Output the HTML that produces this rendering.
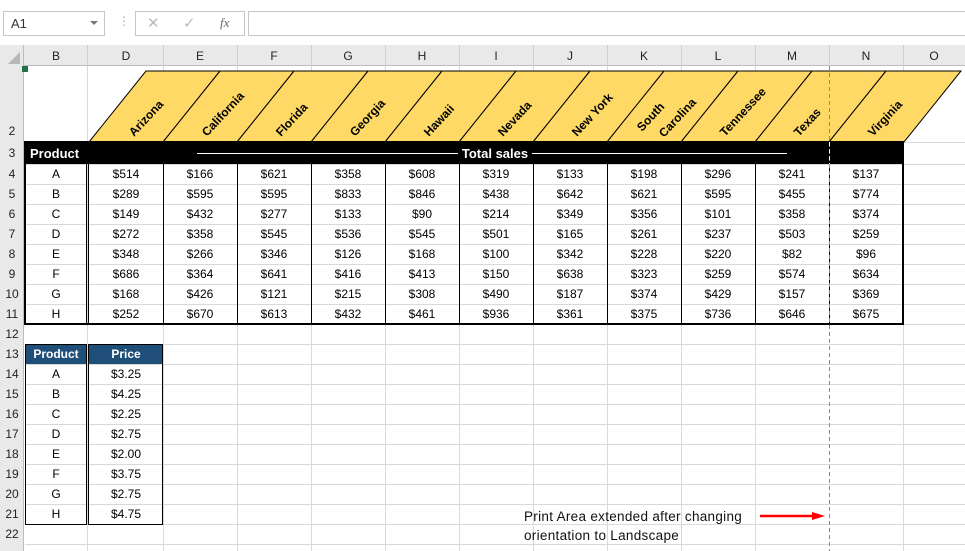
<!DOCTYPE html>
<html><head><meta charset="utf-8"><style>
*{margin:0;padding:0;box-sizing:border-box}
body{width:965px;height:551px;position:relative;overflow:hidden;background:#fff;font-family:"Liberation Sans",sans-serif;color:#000}
.a{position:absolute}
.row{position:absolute;left:25px;display:flex;height:20px;font-size:12px;line-height:20px}
.row span{display:block;text-align:center;width:74px}
.row span.b{width:62px}.row span.g{width:2px}
.rh{position:absolute;left:0;width:24px;text-align:center;font-size:12px;color:#222}
.ch{position:absolute;top:46px;height:20px;line-height:20px;text-align:center;font-size:12px;color:#222}
</style></head><body>
<div class="a" style="left:0;top:0;width:965px;height:45px;background:#fff"></div>
<div class="a" style="left:3px;top:11px;width:102px;height:25px;border:1px solid #c6c6c6;background:#fff;font-size:13px;line-height:23px;padding-left:7px;color:#333">A1</div>
<div class="a" style="left:90px;top:21px;width:0;height:0;border-left:4px solid transparent;border-right:4px solid transparent;border-top:4px solid #777"></div>
<div class="a" style="left:118px;top:14px;font-size:12px;color:#aaa">⋮</div>
<div class="a" style="left:135px;top:11px;width:110px;height:25px;border:1px solid #c6c6c6;background:#fff"></div>
<div class="a" style="left:147px;top:14px;font-size:15px;color:#bbb">✕</div>
<div class="a" style="left:183px;top:14px;font-size:15px;color:#bbb">✓</div>
<div class="a" style="left:220px;top:15px;font-size:13px;font-style:italic;font-family:'Liberation Serif',serif;color:#666">fx</div>
<div class="a" style="left:248px;top:11px;width:720px;height:25px;border:1px solid #c6c6c6;background:#fff"></div>
<div class="a" style="left:0;top:45px;width:965px;height:21px;background:#e9e9e9;border-bottom:1px solid #bdbdbd"></div>
<div class="a" style="left:0;top:45px;width:24px;height:506px;background:#e9e9e9;border-right:1px solid #bdbdbd"></div>
<div class="a" style="left:8px;top:52px;width:0;height:0;border-left:12px solid transparent;border-bottom:12px solid #b8b8b8"></div>
<div class="a" style="left:22px;top:66px;width:6px;height:6px;background:#217346"></div>
<svg class="a" style="left:0;top:45px" width="965" height="21">
<g stroke="#cfcfcf"><line x1="87.5" y1="0" x2="87.5" y2="21"/><line x1="163.5" y1="0" x2="163.5" y2="21"/><line x1="237.5" y1="0" x2="237.5" y2="21"/><line x1="311.5" y1="0" x2="311.5" y2="21"/><line x1="385.5" y1="0" x2="385.5" y2="21"/><line x1="459.5" y1="0" x2="459.5" y2="21"/><line x1="533.5" y1="0" x2="533.5" y2="21"/><line x1="607.5" y1="0" x2="607.5" y2="21"/><line x1="681.5" y1="0" x2="681.5" y2="21"/><line x1="755.5" y1="0" x2="755.5" y2="21"/><line x1="829.5" y1="0" x2="829.5" y2="21"/><line x1="903.5" y1="0" x2="903.5" y2="21"/></g></svg>
<div class="ch" style="left:25px;width:62px">B</div>
<div class="ch" style="left:89px;width:74px">D</div><div class="ch" style="left:163px;width:74px">E</div><div class="ch" style="left:237px;width:74px">F</div><div class="ch" style="left:311px;width:74px">G</div><div class="ch" style="left:385px;width:74px">H</div><div class="ch" style="left:459px;width:74px">I</div><div class="ch" style="left:533px;width:74px">J</div><div class="ch" style="left:607px;width:74px">K</div><div class="ch" style="left:681px;width:74px">L</div><div class="ch" style="left:755px;width:74px">M</div><div class="ch" style="left:829px;width:74px">N</div><div class="ch" style="left:903px;width:62px">O</div>
<svg class="a" style="left:25px;top:66px" width="940" height="485">
<g stroke="#d9d9d9">
<line x1="62.5" y1="0" x2="62.5" y2="485"/><line x1="138.5" y1="0" x2="138.5" y2="485"/><line x1="212.5" y1="0" x2="212.5" y2="485"/><line x1="286.5" y1="0" x2="286.5" y2="485"/><line x1="360.5" y1="0" x2="360.5" y2="485"/><line x1="434.5" y1="0" x2="434.5" y2="485"/><line x1="508.5" y1="0" x2="508.5" y2="485"/><line x1="582.5" y1="0" x2="582.5" y2="485"/><line x1="656.5" y1="0" x2="656.5" y2="485"/><line x1="730.5" y1="0" x2="730.5" y2="485"/><line x1="878.5" y1="0" x2="878.5" y2="485"/>
<line x1="0" y1="76.5" x2="940" y2="76.5"/><line x1="0" y1="98.5" x2="940" y2="98.5"/><line x1="0" y1="118.5" x2="940" y2="118.5"/><line x1="0" y1="138.5" x2="940" y2="138.5"/><line x1="0" y1="158.5" x2="940" y2="158.5"/><line x1="0" y1="178.5" x2="940" y2="178.5"/><line x1="0" y1="198.5" x2="940" y2="198.5"/><line x1="0" y1="218.5" x2="940" y2="218.5"/><line x1="0" y1="238.5" x2="940" y2="238.5"/><line x1="0" y1="258.5" x2="940" y2="258.5"/><line x1="0" y1="278.5" x2="940" y2="278.5"/><line x1="0" y1="298.5" x2="940" y2="298.5"/><line x1="0" y1="318.5" x2="940" y2="318.5"/><line x1="0" y1="338.5" x2="940" y2="338.5"/><line x1="0" y1="358.5" x2="940" y2="358.5"/><line x1="0" y1="378.5" x2="940" y2="378.5"/><line x1="0" y1="398.5" x2="940" y2="398.5"/><line x1="0" y1="418.5" x2="940" y2="418.5"/><line x1="0" y1="438.5" x2="940" y2="438.5"/><line x1="0" y1="458.5" x2="940" y2="458.5"/><line x1="0" y1="478.5" x2="940" y2="478.5"/>
</g></svg>
<div class="rh" style="top:124px">2</div><div class="rh" style="top:146px">3</div><div class="rh" style="top:167px">4</div><div class="rh" style="top:187px">5</div><div class="rh" style="top:207px">6</div><div class="rh" style="top:227px">7</div><div class="rh" style="top:247px">8</div><div class="rh" style="top:267px">9</div><div class="rh" style="top:287px">10</div><div class="rh" style="top:307px">11</div><div class="rh" style="top:327px">12</div><div class="rh" style="top:347px">13</div><div class="rh" style="top:367px">14</div><div class="rh" style="top:387px">15</div><div class="rh" style="top:407px">16</div><div class="rh" style="top:427px">17</div><div class="rh" style="top:447px">18</div><div class="rh" style="top:467px">19</div><div class="rh" style="top:487px">20</div><div class="rh" style="top:507px">21</div><div class="rh" style="top:527px">22</div>
<svg class="a" style="left:0;top:0" width="965" height="170">
<g fill="#ffd966" stroke="#000" stroke-width="1">
<polygon points="89,142 146,71 220,71 163,142"/><polygon points="163,142 220,71 294,71 237,142"/><polygon points="237,142 294,71 368,71 311,142"/><polygon points="311,142 368,71 442,71 385,142"/><polygon points="385,142 442,71 516,71 459,142"/><polygon points="459,142 516,71 590,71 533,142"/><polygon points="533,142 590,71 664,71 607,142"/><polygon points="607,142 664,71 738,71 681,142"/><polygon points="681,142 738,71 812,71 755,142"/><polygon points="755,142 812,71 886,71 829,142"/><polygon points="829,142 886,71 961,71 904,142"/>
</g>
<g font-family="Liberation Sans,sans-serif" font-size="12" font-weight="bold">
<text transform="translate(134,137) rotate(-47)">Arizona</text>
<text transform="translate(207,137) rotate(-47)">California</text>
<text transform="translate(281,137) rotate(-47)">Florida</text>
<text transform="translate(355,137) rotate(-47)">Georgia</text>
<text transform="translate(429,137) rotate(-47)">Hawaii</text>
<text transform="translate(503,137) rotate(-47)">Nevada</text>
<text transform="translate(577,137) rotate(-47)">New York</text>
<text transform="translate(642,132) rotate(-47)">South</text>
<text transform="translate(664,138) rotate(-47)">Carolina</text>
<text transform="translate(725,137) rotate(-47)">Tennessee</text>
<text transform="translate(799,137) rotate(-47)">Texas</text>
<text transform="translate(873,137) rotate(-47)">Virginia</text>
</g>
<rect x="25" y="142" width="878" height="22" fill="#000"/>
<text x="30" y="158" fill="#fff" font-family="Liberation Sans,sans-serif" font-size="13" font-weight="bold">Product</text>
<line x1="197" y1="153.5" x2="458" y2="153.5" stroke="#fff"/><line x1="532" y1="153.5" x2="787" y2="153.5" stroke="#fff"/>
<text x="495" y="158" fill="#fff" text-anchor="middle" font-family="Liberation Sans,sans-serif" font-size="13" font-weight="bold">Total sales</text>
</svg>
<svg class="a" style="left:0;top:0" width="965" height="551">
<rect x="25" y="142" width="878" height="182" fill="none" stroke="#000" stroke-width="2"/>
<g stroke="#000"><line x1="86.5" y1="164" x2="86.5" y2="324"/><line x1="88.5" y1="164" x2="88.5" y2="324"/><line x1="163.5" y1="164" x2="163.5" y2="324"/><line x1="237.5" y1="164" x2="237.5" y2="324"/><line x1="311.5" y1="164" x2="311.5" y2="324"/><line x1="385.5" y1="164" x2="385.5" y2="324"/><line x1="459.5" y1="164" x2="459.5" y2="324"/><line x1="533.5" y1="164" x2="533.5" y2="324"/><line x1="607.5" y1="164" x2="607.5" y2="324"/><line x1="681.5" y1="164" x2="681.5" y2="324"/><line x1="755.5" y1="164" x2="755.5" y2="324"/><line x1="829.5" y1="164" x2="829.5" y2="324"/></g>
<rect x="25" y="344" width="62" height="20" fill="#1f4e78"/><rect x="89" y="344" width="74" height="20" fill="#1f4e78"/>
<rect x="25.5" y="344.5" width="61" height="180" fill="none" stroke="#000"/><rect x="88.5" y="344.5" width="74" height="180" fill="none" stroke="#000"/>
<line x1="829.5" y1="66" x2="829.5" y2="551" stroke="#888" stroke-dasharray="4,3"/>
<line x1="829.5" y1="142" x2="829.5" y2="164" stroke="#fff" stroke-dasharray="4,3"/>
<line x1="760" y1="516" x2="815" y2="516" stroke="#f00" stroke-width="2.5"/><polygon points="812,512 825,516 812,520" fill="#f00"/>
</svg>
<div class="row" style="top:164px"><span class="b">A</span><span class="g"></span><span>$514</span><span>$166</span><span>$621</span><span>$358</span><span>$608</span><span>$319</span><span>$133</span><span>$198</span><span>$296</span><span>$241</span><span>$137</span></div>
<div class="row" style="top:184px"><span class="b">B</span><span class="g"></span><span>$289</span><span>$595</span><span>$595</span><span>$833</span><span>$846</span><span>$438</span><span>$642</span><span>$621</span><span>$595</span><span>$455</span><span>$774</span></div>
<div class="row" style="top:204px"><span class="b">C</span><span class="g"></span><span>$149</span><span>$432</span><span>$277</span><span>$133</span><span>$90</span><span>$214</span><span>$349</span><span>$356</span><span>$101</span><span>$358</span><span>$374</span></div>
<div class="row" style="top:224px"><span class="b">D</span><span class="g"></span><span>$272</span><span>$358</span><span>$545</span><span>$536</span><span>$545</span><span>$501</span><span>$165</span><span>$261</span><span>$237</span><span>$503</span><span>$259</span></div>
<div class="row" style="top:244px"><span class="b">E</span><span class="g"></span><span>$348</span><span>$266</span><span>$346</span><span>$126</span><span>$168</span><span>$100</span><span>$342</span><span>$228</span><span>$220</span><span>$82</span><span>$96</span></div>
<div class="row" style="top:264px"><span class="b">F</span><span class="g"></span><span>$686</span><span>$364</span><span>$641</span><span>$416</span><span>$413</span><span>$150</span><span>$638</span><span>$323</span><span>$259</span><span>$574</span><span>$634</span></div>
<div class="row" style="top:284px"><span class="b">G</span><span class="g"></span><span>$168</span><span>$426</span><span>$121</span><span>$215</span><span>$308</span><span>$490</span><span>$187</span><span>$374</span><span>$429</span><span>$157</span><span>$369</span></div>
<div class="row" style="top:304px"><span class="b">H</span><span class="g"></span><span>$252</span><span>$670</span><span>$613</span><span>$432</span><span>$461</span><span>$936</span><span>$361</span><span>$375</span><span>$736</span><span>$646</span><span>$675</span></div>
<div class="row" style="top:344px;color:#fff;font-weight:bold"><span class="b">Product</span><span class="g"></span><span>Price</span></div>
<div class="row" style="top:364px"><span class="b">A</span><span class="g"></span><span>$3.25</span></div>
<div class="row" style="top:384px"><span class="b">B</span><span class="g"></span><span>$4.25</span></div>
<div class="row" style="top:404px"><span class="b">C</span><span class="g"></span><span>$2.25</span></div>
<div class="row" style="top:424px"><span class="b">D</span><span class="g"></span><span>$2.75</span></div>
<div class="row" style="top:444px"><span class="b">E</span><span class="g"></span><span>$2.00</span></div>
<div class="row" style="top:464px"><span class="b">F</span><span class="g"></span><span>$3.75</span></div>
<div class="row" style="top:484px"><span class="b">G</span><span class="g"></span><span>$2.75</span></div>
<div class="row" style="top:504px"><span class="b">H</span><span class="g"></span><span>$4.75</span></div>
<div class="a" style="left:524px;top:507px;font-size:13.5px;letter-spacing:0.3px;line-height:19px;color:#111">Print Area extended after changing<br>orientation to Landscape</div>
</body></html>
